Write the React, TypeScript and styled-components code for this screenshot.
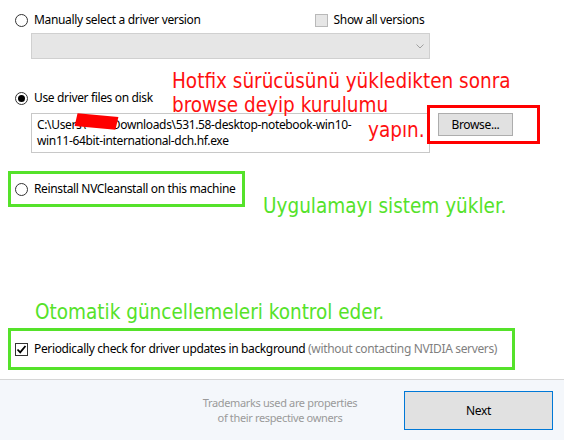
import React from "react";
import styled, { createGlobalStyle } from "styled-components";

const Global = createGlobalStyle`
  html, body { margin: 0; padding: 0; background: #fff; }
  body { font-family: "Noto Sans", "Open Sans", sans-serif; font-size: 12px; letter-spacing: -0.35px; color: #000; }
`;

const Page = styled.div`
  width: 564px;
  height: 440px;
  display: flex;
  flex-direction: column;
  overflow: hidden;
`;

const Content = styled.div`
  position: relative;
  height: 379px;
  padding: 11px 0 0 0;
  box-sizing: border-box;
  display: flex;
  flex-direction: column;
`;

const Row = styled.div<{ $mt?: number }>`
  display: flex;
  align-items: center;
  margin-top: ${(p) => p.$mt ?? 0}px;
  padding-left: 15px;
  height: 18px;
`;

const Option = styled.label`
  display: flex;
  align-items: center;
  gap: 6px;
  line-height: 16px;
  white-space: nowrap;
`;

const RadioCircle = styled.span<{ $checked?: boolean }>`
  width: 11px;
  height: 11px;
  border: 1px solid #333;
  border-radius: 50%;
  background: #fff;
  display: flex;
  align-items: center;
  justify-content: center;
  flex: none;
  &::after {
    content: "";
    display: ${(p) => (p.$checked ? "block" : "none")};
    width: 7px;
    height: 7px;
    border-radius: 50%;
    background: #000;
  }
`;

const Box = styled.span<{ $disabled?: boolean }>`
  width: 11px;
  height: 11px;
  border: 1px solid ${(p) => (p.$disabled ? "#b9b9b9" : "#333")};
  background: ${(p) => (p.$disabled ? "#e6e6e6" : "#fff")};
  display: flex;
  align-items: center;
  justify-content: center;
  flex: none;
`;

const Spacer = styled.div<{ $w: number }>`
  width: ${(p) => p.$w}px;
  flex: none;
`;

const Select = styled.div`
  margin: 4px 0 0 31px;
  width: 399px;
  height: 26px;
  box-sizing: border-box;
  border: 1px solid #d0d0d0;
  background: #e6e6e6;
  display: flex;
  align-items: center;
  justify-content: flex-end;
  padding-right: 5px;
`;

const PathRow = styled.div`
  display: flex;
  align-items: flex-start;
  margin: 6px 0 0 31px;
  gap: 8px;
`;

const PathBox = styled.div`
  width: 399px;
  height: 40px;
  box-sizing: border-box;
  border: 1px solid #c8c8c8;
  background: #fff;
  padding: 3px 0 0 5px;
  line-height: 16px;
  white-space: pre;
`;

const Button = styled.button<{ $primary?: boolean }>`
  font-family: inherit;
  font-size: 12px;
  letter-spacing: inherit;
  color: #000;
  background: #e1e1e1;
  border: 1px solid ${(p) => (p.$primary ? "#0078d7" : "#adadad")};
  padding: 0;
  margin: 0;
  display: flex;
  align-items: center;
  justify-content: center;
`;

const BrowseButton = styled(Button)`
  width: 75px;
  height: 23px;
`;

const NoteFrame = styled.div<{ $w: number; $mt: number; $h: number }>`
  margin: ${(p) => p.$mt}px 0 0 8px;
  width: ${(p) => p.$w}px;
  height: ${(p) => p.$h}px;
  box-sizing: border-box;
  border: 3px solid #55e22a;
  display: flex;
  align-items: center;
  padding-left: 4px;
`;

const Muted = styled.span`
  color: #7f7f7f;
`;

const Redact = styled.div`
  position: absolute;
  left: 76px;
  top: 115px;
  width: 41px;
  height: 13px;
  background: #ff0000;
  transform: rotate(5deg) skewX(-8deg);
`;

const Annotation = styled.div<{ $color: string; $x: number; $y: number }>`
  position: absolute;
  left: ${(p) => p.$x}px;
  top: ${(p) => p.$y}px;
  color: ${(p) => p.$color};
  font-family: "DejaVu Sans Condensed", "DejaVu Sans", sans-serif;
  font-size: 20.5px;
  letter-spacing: 0;
  line-height: 24px;
  white-space: nowrap;
`;

const RedFrame = styled.div`
  position: absolute;
  left: 427px;
  top: 105px;
  width: 113px;
  height: 39px;
  box-sizing: border-box;
  border: 3px solid #ff0000;
`;

const Footer = styled.div`
  height: 61px;
  box-sizing: border-box;
  border-top: 1px solid #d6d6d6;
  background: #f4f7fb;
  display: flex;
  align-items: center;
  padding-left: 175px;
`;

const FooterNote = styled.div`
  width: 210px;
  text-align: center;
  color: #9a9a9a;
  font-size: 11px;
  line-height: 15px;
`;

const NextButton = styled(Button)`
  width: 149px;
  height: 39px;
  margin-left: 19px;
`;

const Chevron = () => (
  <svg width="8" height="5" viewBox="0 0 8 5">
    <path d="M0.5 0.5 L4 4 L7.5 0.5" fill="none" stroke="#a0a0a0" strokeWidth="1" />
  </svg>
);

const Check = () => (
  <svg width="11" height="11" viewBox="0 0 11 11">
    <path d="M1.5 5.5 L4.2 8.3 L9.5 2" fill="none" stroke="#000" strokeWidth="1.8" />
  </svg>
);

export default function App() {
  return (
    <Page>
      <Global />
      <Content>
        <Row>
          <Option>
            <RadioCircle />
            Manually select a driver version
          </Option>
          <Spacer $w={114} />
          <Option>
            <Box $disabled />
            Show all versions
          </Option>
        </Row>
        <Select>
          <Chevron />
        </Select>
        <Row $mt={30}>
          <Option>
            <RadioCircle $checked />
            Use driver files on disk
          </Option>
        </Row>
        <PathRow>
          <PathBox>{"C:\\Users\\        \\Downloads\\531.58-desktop-notebook-win10-\nwin11-64bit-international-dch.hf.exe"}</PathBox>
          <BrowseButton>Browse...</BrowseButton>
        </PathRow>
        <NoteFrame $w={237} $mt={18} $h={36}>
          <Option>
            <RadioCircle />
            Reinstall NVCleanstall on this machine
          </Option>
        </NoteFrame>
        <NoteFrame $w={507} $mt={121} $h={42}>
          <Option>
            <Box>
              <Check />
            </Box>
            <span>
              Periodically check for driver updates in background <Muted>(without contacting NVIDIA servers)</Muted>
            </span>
          </Option>
        </NoteFrame>
        <Redact />
        <RedFrame />
        <Annotation $color="#ff1010" $x={172} $y={69}>
          Hotfix sürücüsünü yükledikten sonra
          <br />
          browse deyip kurulumu
        </Annotation>
        <Annotation $color="#ff1010" $x={368} $y={118}>
          yapın.
        </Annotation>
        <Annotation $color="#55e22a" $x={263} $y={194}>
          Uygulamayı sistem yükler.
        </Annotation>
        <Annotation $color="#55e22a" $x={35} $y={300}>
          Otomatik güncellemeleri kontrol eder.
        </Annotation>
      </Content>
      <Footer>
        <FooterNote>
          Trademarks used are properties
          <br />
          of their respective owners
        </FooterNote>
        <NextButton $primary>Next</NextButton>
      </Footer>
    </Page>
  );
}
